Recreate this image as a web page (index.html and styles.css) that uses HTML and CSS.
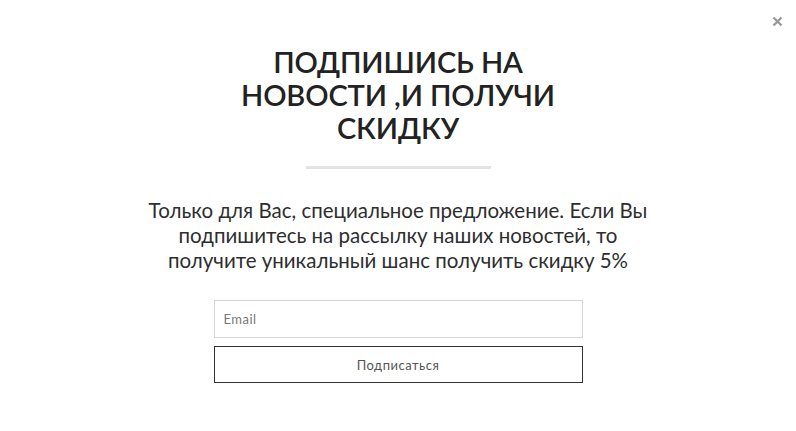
FILE: index.html
```html
<!DOCTYPE html>
<html lang="ru">
<head>
<meta charset="utf-8">
<link rel="stylesheet" href="styles.css">
</head>
<body>
<div class="popup">
  <button class="close" aria-label="Закрыть">
    <svg width="11" height="11" viewBox="0 0 11 11"><path d="M1.5 1.5l8 8M9.5 1.5l-8 8" stroke="#9a9a9a" stroke-width="2.4"/></svg>
  </button>
  <h1 class="title">ПОДПИШИСЬ НА<br>НОВОСТИ ,И ПОЛУЧИ<br>СКИДКУ</h1>
  <div class="divider"></div>
  <p class="text">Только для Вас, специальное предложение. Если Вы<br>подпишитесь на рассылку наших новостей, то<br>получите уникальный шанс получить скидку 5%</p>
  <form class="form">
    <input class="email" type="text" placeholder="Email">
    <button class="submit" type="button">Подписаться</button>
  </form>
</div>
</body>
</html>
```
FILE: styles.css
```css
html, body {
  margin: 0;
  padding: 0;
  background: #fff;
}
body {
  font-family: "Lato", "Open Sans", sans-serif;
  color: #2b2b2b;
}
.popup {
  position: relative;
  width: 796px;
  height: 431px;
  display: flex;
  flex-direction: column;
  align-items: center;
  padding-top: 45px;
  box-sizing: border-box;
}
.close {
  position: absolute;
  top: 16px;
  right: 13px;
  border: 0;
  background: none;
  padding: 0;
  width: 11px;
  height: 11px;
  display: flex;
}
.title {
  margin: 0;
  font-size: 29px;
  line-height: 33px;
  font-weight: 600;
  text-align: center;
  letter-spacing: -0.1px;
  color: #222;
}
.divider {
  width: 185px;
  height: 3px;
  background: #e3e3e3;
  margin-top: 22px;
}
.text {
  margin: 29px 0 0;
  font-size: 20.5px;
  line-height: 25px;
  text-align: center;
  color: #2e2e2e;
}
.form {
  margin-top: 27px;
  display: flex;
  flex-direction: column;
  gap: 8px;
  width: 369px;
}
.email {
  height: 38px;
  box-sizing: border-box;
  border: 1px solid #d4d4dc;
  padding: 0 9px;
  font-family: inherit;
  font-size: 13px;
  letter-spacing: 0.5px;
  color: #555;
  outline: none;
}
.email::placeholder {
  color: #777;
}
.submit {
  height: 37px;
  box-sizing: border-box;
  border: 1px solid #333;
  background: #fff;
  font-family: inherit;
  font-size: 13px;
  letter-spacing: 0.5px;
  color: #555;
}
```
